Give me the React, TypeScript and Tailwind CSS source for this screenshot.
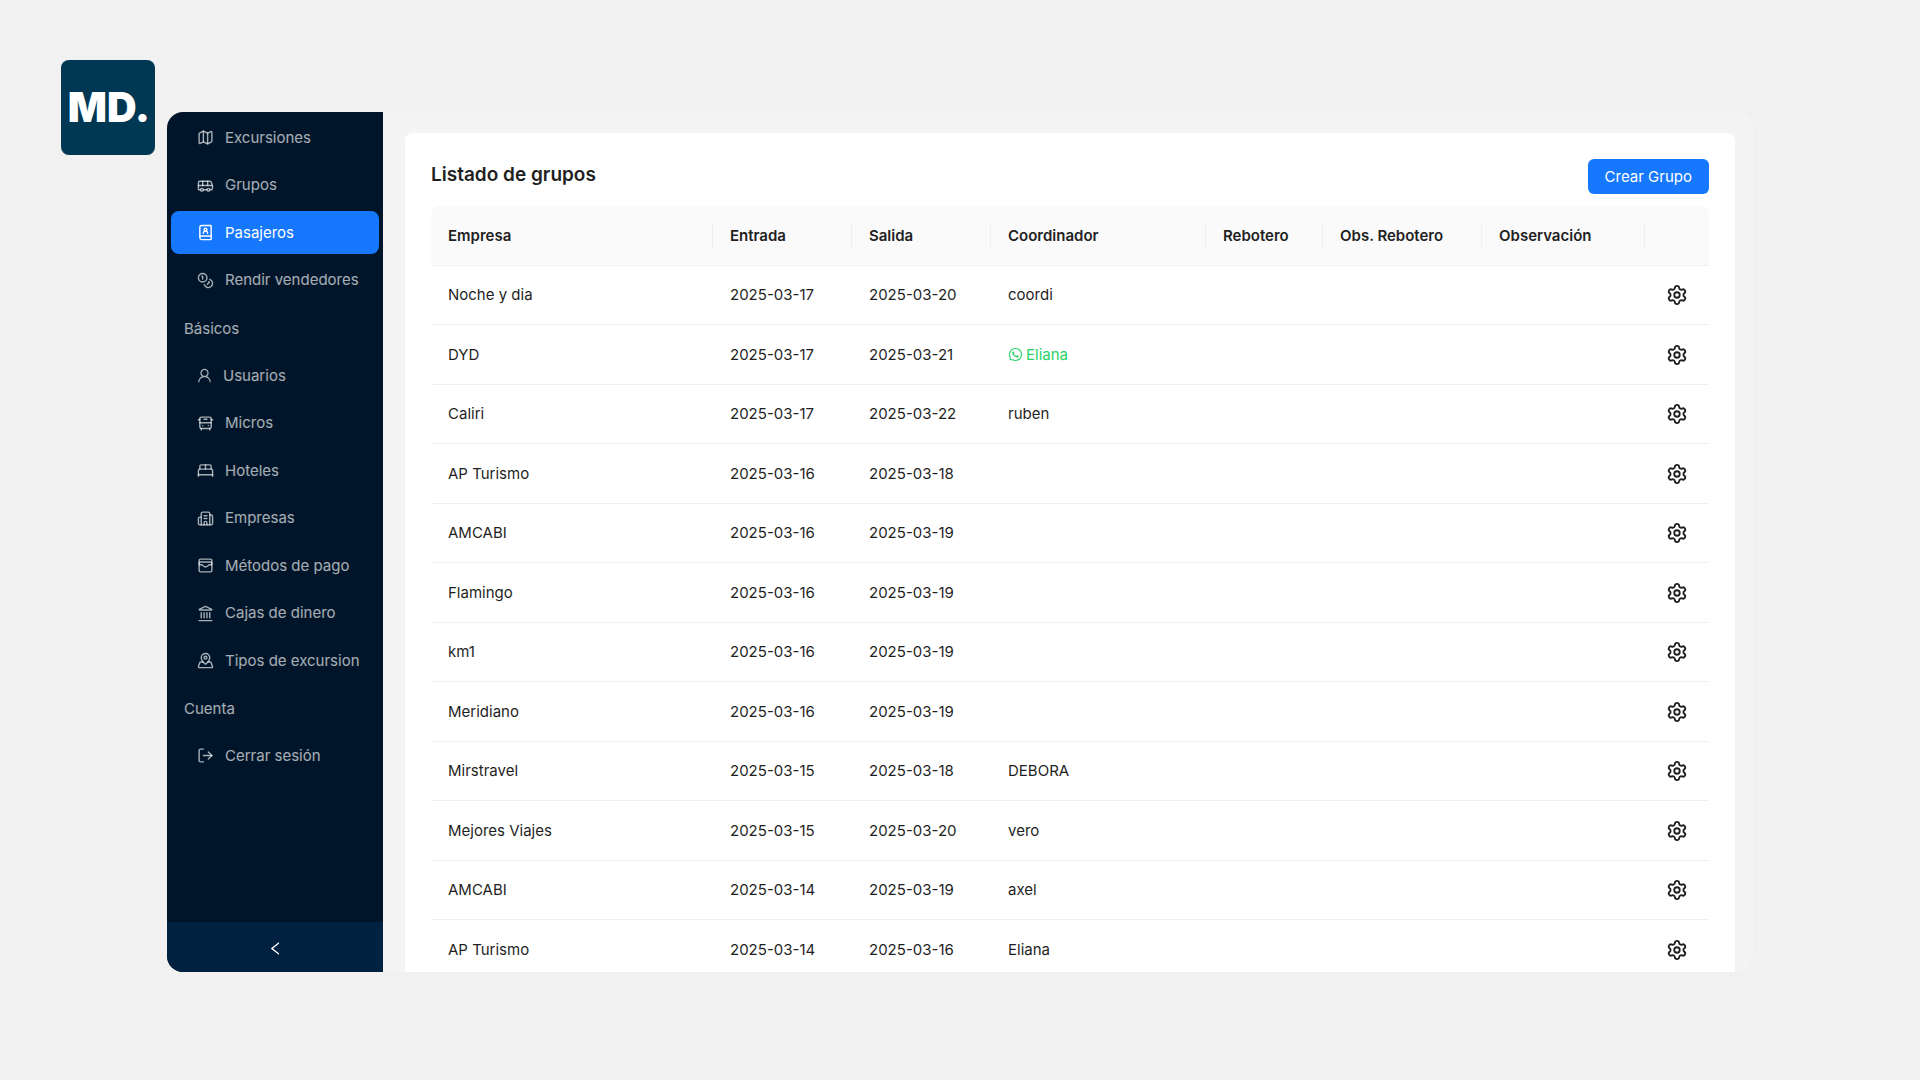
import React from 'react'
import {
    BedDouble,
    BookUser,
    Building2,
    Bus,
    BusFront,
    Coins,
    Landmark,
    LogOut,
    Map,
    MapPinned,
    Settings,
    WalletCards
} from 'lucide-react'
import { AiOutlineLeft, AiOutlineUser, AiOutlineWhatsApp } from 'react-icons/ai'

// Ant icons come with a wide margin, so crop it off
function UserIcon() {
    return <AiOutlineUser viewBox="64 64 896 896" className="size-[15px]" />
}

const sections = [
    {
        title: null,
        items: [
            { label: 'Excursiones', icon: Map },
            { label: 'Grupos', icon: Bus },
            { label: 'Pasajeros', icon: BookUser, active: true },
            { label: 'Rendir vendedores', icon: Coins }
        ]
    },
    {
        title: 'Básicos',
        items: [
            { label: 'Usuarios', icon: UserIcon },
            { label: 'Micros', icon: BusFront },
            { label: 'Hoteles', icon: BedDouble },
            { label: 'Empresas', icon: Building2 },
            { label: 'Métodos de pago', icon: WalletCards },
            { label: 'Cajas de dinero', icon: Landmark },
            { label: 'Tipos de excursion', icon: MapPinned }
        ]
    },
    {
        title: 'Cuenta',
        items: [{ label: 'Cerrar sesión', icon: LogOut }]
    }
]

const columns = [
    { title: 'Empresa', width: '' },
    { title: 'Entrada', width: 'w-[139px]' },
    { title: 'Salida', width: 'w-[139px]' },
    { title: 'Coordinador', width: 'w-[215px]' },
    { title: 'Rebotero', width: 'w-[117px]' },
    { title: 'Obs. Rebotero', width: 'w-[159px]' },
    { title: 'Observación', width: 'w-[163px]' },
    { title: '', width: 'w-16' }
]

const groups = [
    { empresa: 'Noche y dia', entrada: '2025-03-17', salida: '2025-03-20', coordinador: 'coordi' },
    { empresa: 'DYD', entrada: '2025-03-17', salida: '2025-03-21', coordinador: 'Eliana', whatsapp: true },
    { empresa: 'Caliri', entrada: '2025-03-17', salida: '2025-03-22', coordinador: 'ruben' },
    { empresa: 'AP Turismo', entrada: '2025-03-16', salida: '2025-03-18', coordinador: '' },
    { empresa: 'AMCABI', entrada: '2025-03-16', salida: '2025-03-19', coordinador: '' },
    { empresa: 'Flamingo', entrada: '2025-03-16', salida: '2025-03-19', coordinador: '' },
    { empresa: 'km1', entrada: '2025-03-16', salida: '2025-03-19', coordinador: '' },
    { empresa: 'Meridiano', entrada: '2025-03-16', salida: '2025-03-19', coordinador: '' },
    { empresa: 'Mirstravel', entrada: '2025-03-15', salida: '2025-03-18', coordinador: 'DEBORA' },
    { empresa: 'Mejores Viajes', entrada: '2025-03-15', salida: '2025-03-20', coordinador: 'vero' },
    { empresa: 'AMCABI', entrada: '2025-03-14', salida: '2025-03-19', coordinador: 'axel' },
    { empresa: 'AP Turismo', entrada: '2025-03-14', salida: '2025-03-16', coordinador: 'Eliana' }
]

function Sidebar() {
    return (
        <aside className="flex w-[216px] shrink-0 flex-col bg-[#001529] text-white/65">
            <nav className="flex-1 overflow-hidden px-1 pt-0.5">
                {sections.map((section, i) => (
                    <div key={i}>
                        {section.title && (
                            <h2 className="flex h-12 items-center px-[13px] pt-0.5">{section.title}</h2>
                        )}
                        <ul>
                            {section.items.map(({ label, icon: Icon, ...item }) => (
                                <li key={label} className="flex items-center odd:h-[47px] even:h-12">
                                    <a
                                        href="#"
                                        className={
                                            'active' in item
                                                ? 'flex h-[43px] w-full items-center gap-[11px] rounded-lg bg-[#1677ff] pl-[26px] text-white'
                                                : 'flex h-[43px] w-full items-center gap-[11px] rounded-lg pl-[26px] hover:text-white'
                                        }
                                    >
                                        <Icon className="size-[17px]" />
                                        {label}
                                    </a>
                                </li>
                            ))}
                        </ul>
                    </div>
                ))}
            </nav>
            <button aria-label="Contraer menú" className="flex h-[50px] items-center justify-center bg-[#002140] pt-0.5 text-white">
                <AiOutlineLeft className="size-[17px]" />
            </button>
        </aside>
    )
}

function GroupsTable() {
    return (
        <table className="w-full table-fixed border-separate border-spacing-0 text-left">
            <thead>
                <tr>
                    {columns.map((col, i) => (
                        <th
                            key={i}
                            className={`h-[60px] border-b border-[#f0f0f0] bg-[#fafafa] p-0 font-semibold first:rounded-tl-lg last:rounded-tr-lg ${col.width}`}
                        >
                            <div
                                className={
                                    i < columns.length - 1
                                        ? 'h-6 border-r border-[#f0f0f0] pl-[17px] leading-6 whitespace-nowrap'
                                        : 'h-6'
                                }
                            >
                                {col.title}
                            </div>
                        </th>
                    ))}
                </tr>
            </thead>
            <tbody>
                {groups.map((group, i) => (
                    <tr key={i} className="odd:h-[59px] even:h-[60px] [&>td]:border-b [&>td]:border-[#f0f0f0] [&>td]:px-[17px]">
                        <td>{group.empresa}</td>
                        <td>{group.entrada}</td>
                        <td>{group.salida}</td>
                        <td>
                            {group.whatsapp ? (
                                <a href="#" className="flex items-center gap-[3px] text-[#25d366]">
                                    <AiOutlineWhatsApp className="size-[15px]" />
                                    {group.coordinador}
                                </a>
                            ) : (
                                group.coordinador
                            )}
                        </td>
                        <td />
                        <td />
                        <td />
                        <td>
                            <button aria-label={`Opciones de ${group.empresa}`} className="mx-auto block">
                                <Settings className="size-[22px]" />
                            </button>
                        </td>
                    </tr>
                ))}
            </tbody>
        </table>
    )
}

export default function App() {
    return (
        <div className="flex h-screen items-start gap-3 bg-[#f1f1f1] pt-[60px] pr-[167px] pb-[108px] pl-[61px] font-[Inter,sans-serif] text-[15px] leading-6 text-[#1f1f1f]">
            {/* Brand */}
            <div className="flex h-[95px] w-[94px] shrink-0 items-center justify-center rounded-lg bg-[#003854] pl-0.5 text-[41px] leading-none font-black text-white">
                MD.
            </div>

            {/* App window */}
            <div className="mt-[52px] flex min-w-0 flex-1 self-stretch overflow-hidden rounded-2xl bg-[#f4f4f4]">
                <Sidebar />
                <main className="min-w-0 flex-1 overflow-hidden pt-[21px] pr-[18px] pl-[22px]">
                    <div className="rounded-t-lg bg-white px-[26px] pt-[26px]">
                        <header className="mb-3 flex items-start justify-between">
                            <h1 className="text-[19px] leading-8 font-semibold">Listado de grupos</h1>
                            <button className="h-[35px] rounded-md bg-[#1677ff] px-[17px] text-white">Crear Grupo</button>
                        </header>
                        <GroupsTable />
                    </div>
                </main>
            </div>
        </div>
    )
}
